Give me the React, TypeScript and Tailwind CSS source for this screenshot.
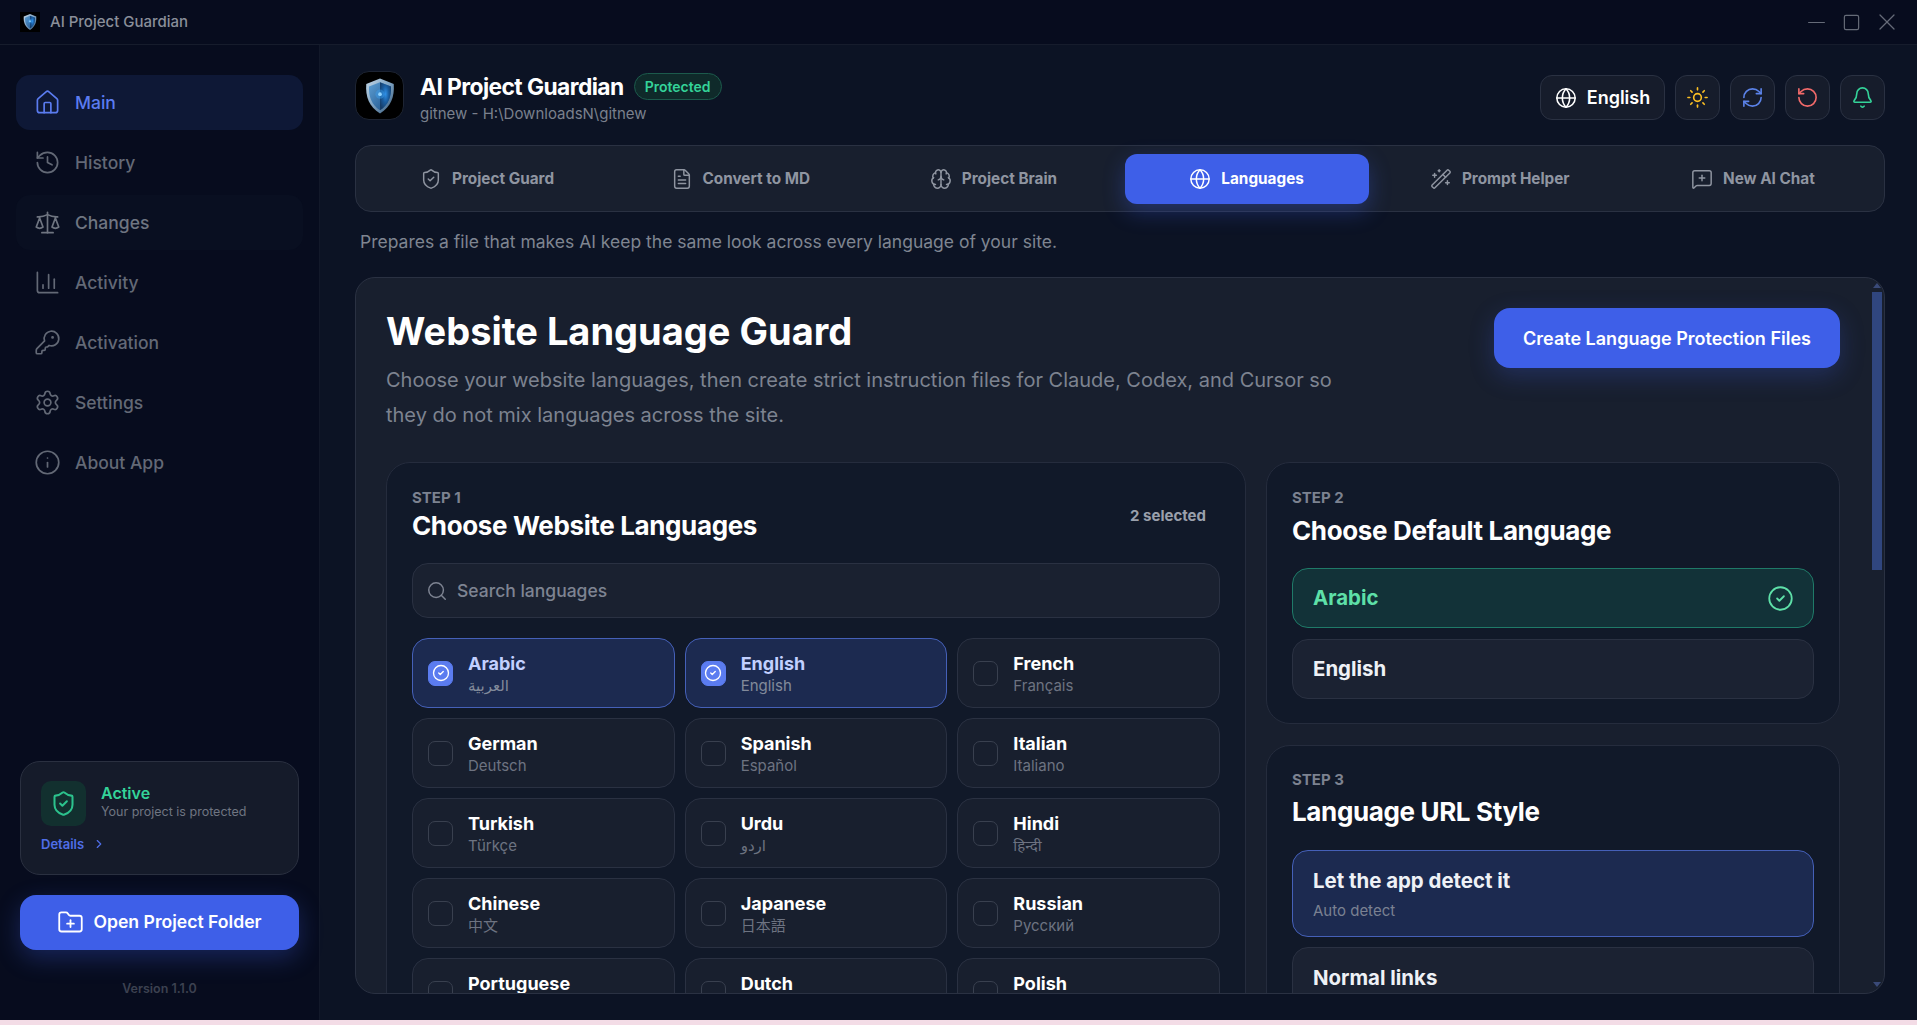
import {
  Bell,
  Brain,
  ChartColumn,
  ChevronRight,
  CircleCheck,
  FileText,
  FolderPlus,
  Globe,
  History,
  House,
  Info,
  KeyRound,
  MessageSquarePlus,
  Minus,
  RefreshCw,
  RotateCcw,
  Scale,
  Search,
  Settings,
  ShieldCheck,
  Square,
  Sun,
  WandSparkles,
  X,
} from "lucide-react";
import type { LucideIcon } from "lucide-react";
import { useId } from "react";

const navItems: { label: string; icon: LucideIcon }[] = [
  { label: "Main", icon: House },
  { label: "History", icon: History },
  { label: "Changes", icon: Scale },
  { label: "Activity", icon: ChartColumn },
  { label: "Activation", icon: KeyRound },
  { label: "Settings", icon: Settings },
  { label: "About App", icon: Info },
];

const tabs: { label: string; icon: LucideIcon }[] = [
  { label: "Project Guard", icon: ShieldCheck },
  { label: "Convert to MD", icon: FileText },
  { label: "Project Brain", icon: Brain },
  { label: "Languages", icon: Globe },
  { label: "Prompt Helper", icon: WandSparkles },
  { label: "New AI Chat", icon: MessageSquarePlus },
];

const languages = [
  { name: "Arabic", native: "العربية", checked: true },
  { name: "English", native: "English", checked: true },
  { name: "French", native: "Français" },
  { name: "German", native: "Deutsch" },
  { name: "Spanish", native: "Español" },
  { name: "Italian", native: "Italiano" },
  { name: "Turkish", native: "Türkçe" },
  { name: "Urdu", native: "اردو" },
  { name: "Hindi", native: "हिन्दी" },
  { name: "Chinese", native: "中文" },
  { name: "Japanese", native: "日本語" },
  { name: "Russian", native: "Русский" },
  { name: "Portuguese", native: "Português" },
  { name: "Dutch", native: "Nederlands" },
  { name: "Polish", native: "Polski" },
];

function ShieldLogo({ className }: { className: string }) {
  const id = useId();
  return (
    <svg viewBox="0 0 48 48" className={className}>
      <defs>
        <linearGradient id={id + "rim"} x1="0" y1="0" x2="1" y2="1">
          <stop offset="0" stopColor="#c4d8e8" />
          <stop offset="0.5" stopColor="#7fa3c2" />
          <stop offset="1" stopColor="#35587a" />
        </linearGradient>
        <linearGradient id={id + "left"} x1="0" y1="0" x2="1" y2="1">
          <stop offset="0" stopColor="#5d9fd4" />
          <stop offset="1" stopColor="#1c4f86" />
        </linearGradient>
        <radialGradient id={id + "core"} cx="0.5" cy="0.42" r="0.6">
          <stop offset="0" stopColor="#2f8fe6" />
          <stop offset="0.5" stopColor="#1a5c9e" />
          <stop offset="1" stopColor="#163d68" />
        </radialGradient>
      </defs>
      <path d="M24 5 L39 11 C40 25 36 36 24 43 C12 36 8 25 9 11 Z" fill={"url(#" + id + "rim)"} />
      <path d="M24 9 L36 13.5 C36.5 25 33 33.5 24 39.5 C15 33.5 11.5 25 12 13.5 Z" fill={"url(#" + id + "left)"} />
      <path d="M24 9 L36 13.5 C36.5 25 33 33.5 24 39.5 Z" fill={"url(#" + id + "core)"} />
      <circle cx="24" cy="22" r="5" fill="#3aa0f2" fillOpacity="0.45" />
      <circle cx="24" cy="22" r="2" fill="#8fd2ff" />
    </svg>
  );
}

function Sidebar() {
  return (
    <aside className="w-[320px] shrink-0 border-r border-[#121829] bg-[#070c1e] flex flex-col px-4 pt-[30px]">
      <nav className="flex flex-col gap-[5px]">
        {navItems.map((item, i) => (
          <div
            key={item.label}
            className={
              "h-[55px] rounded-[14px] flex items-center gap-[14px] pl-[18px] text-[17.5px] font-medium " +
              (i === 0
                ? "bg-[#0e1836] text-[#5b7cf0]"
                : i === 2
                  ? "bg-[#090f21] text-[#6f7581]"
                  : "text-[#636976]")
            }
          >
            <item.icon className="w-[27px] h-[27px]" strokeWidth={1.5} />
            <span className="pt-[2px]">{item.label}</span>
          </div>
        ))}
      </nav>
      <div className="flex-1" />
      <div className="mx-1 h-[114px] rounded-[20px] border border-[#2a3040] bg-[#151b2a] px-[20px] pt-[19px]">
        <div className="flex items-center gap-[15px]">
          <div className="w-[45px] h-[45px] rounded-[10px] bg-[#12302f] flex items-center justify-center text-[#2cc28d]">
            <ShieldCheck className="w-[27px] h-[27px]" strokeWidth={1.8} />
          </div>
          <div className="-mt-[2px]">
            <div className="text-[16px] leading-[19px] font-semibold text-[#34d399]">Active</div>
            <div className="text-[12.5px] leading-[18px] text-[#6f7581]">Your project is protected</div>
          </div>
        </div>
        <div className="mt-[9px] flex items-center gap-[8px] text-[13px] leading-[18px] font-semibold text-[#4f6ee8]">
          Details
          <ChevronRight className="w-[14px] h-[14px]" strokeWidth={2} />
        </div>
      </div>
      <div className="mx-1 mt-5 h-[55px] rounded-[16px] bg-[#3e5fe8] shadow-[0_8px_24px_rgba(62,95,232,0.3)] flex items-center justify-center gap-[9px] text-white text-[17.6px] font-semibold">
        <FolderPlus className="w-[27px] h-[27px]" strokeWidth={1.6} />
        Open Project Folder
      </div>
      <div className="mt-[29px] mb-[21px] text-center text-[12.5px] leading-[20px] font-semibold text-[#3c4150]">Version 1.1.0</div>
    </aside>
  );
}

function Header() {
  return (
    <header className="flex items-center justify-between h-[49px]">
      <div className="flex items-start gap-[16px]">
        <div className="w-[49px] h-[49px] rounded-[14px] bg-black border border-[#1d2433] flex items-center justify-center">
          <ShieldLogo className="w-[44px] h-[44px]" />
        </div>
        <div className="pt-[2px]">
          <div className="flex items-center gap-[10px] h-[29px]">
            <span className="text-[22.8px] font-bold tracking-tight text-white">AI Project Guardian</span>
            <span className="-mt-[2px] h-[27px] px-[10px] rounded-full border border-[#1c5a4c] bg-[#0f2a2a] text-[14px] font-semibold text-[#34d399] flex items-center">
              Protected
            </span>
          </div>
          <div className="mt-[2px] text-[15px] leading-[20px] text-[#7a808d]">gitnew - H:\DownloadsN\gitnew</div>
        </div>
      </div>
      <div className="flex items-center gap-[10px]">
        <div className="h-[45px] w-[125px] rounded-[12px] border border-[#2a3142] bg-[#161c2b] flex items-center justify-center gap-[10px] text-white text-[18px] font-semibold">
          <Globe className="w-[22px] h-[22px]" strokeWidth={1.7} />
          English
        </div>
        <IconButton icon={Sun} color="text-[#fbbf24]" />
        <IconButton icon={RefreshCw} color="text-[#5b82e8]" />
        <IconButton icon={RotateCcw} color="text-[#f26a6a]" />
        <IconButton icon={Bell} color="text-[#34d399]" />
      </div>
    </header>
  );
}

function IconButton({ icon: Icon, color }: { icon: LucideIcon; color: string }) {
  return (
    <div className={"w-[45px] h-[45px] rounded-[12px] border border-[#2a3142] bg-[#161c2b] flex items-center justify-center " + color}>
      <Icon className="w-[23px] h-[23px]" strokeWidth={1.7} />
    </div>
  );
}

function TabBar() {
  return (
    <div className="mt-[23px] h-[67px] rounded-[16px] border border-[#2a3142] bg-[#181f2e] px-[9px] pt-[8px] pb-[7px] grid grid-cols-6 gap-[9px]">
      {tabs.map((tab) => (
        <div
          key={tab.label}
          className={
            "rounded-[12px] flex items-center justify-center gap-[10px] text-[15.3px] font-bold " +
            (tab.label === "Languages"
              ? "bg-[#3e5fe8] text-white shadow-[0_8px_22px_rgba(62,95,232,0.32)]"
              : "text-[#8f95a1]")
          }
        >
          <tab.icon className="w-[22px] h-[22px]" strokeWidth={1.6} />
          {tab.label}
        </div>
      ))}
    </div>
  );
}

function StepLabel({ children }: { children: string }) {
  return <div className="text-[15px] leading-[20px] font-bold text-[#7c8290]">{children}</div>;
}

function LanguageCard({ name, native, checked }: { name: string; native: string; checked?: boolean }) {
  return (
    <div
      className={
        "h-[70px] rounded-[16px] border flex items-center gap-[15px] pl-[15px] " +
        (checked ? "border-[#4560b8] bg-[#1c2a50]" : "border-[#2a3142] bg-[#181f2e]")
      }
    >
      <div
        className={
          "w-[25px] h-[25px] rounded-[7px] flex items-center justify-center border " +
          (checked ? "bg-[#5b7cf0] border-[#5b7cf0] text-white" : "border-[#39404f]")
        }
      >
        {checked && <CircleCheck className="w-[18px] h-[18px]" strokeWidth={1.8} />}
      </div>
      <div className="pt-[2px]">
        <div className={"text-[18px] leading-[24px] font-bold " + (checked ? "text-[#c2d0ff]" : "text-white")}>{name}</div>
        <div className={"text-[15px] leading-[20px] " + (checked ? "text-[#828a9b]" : "text-[#6d7381]")}>{native}</div>
      </div>
    </div>
  );
}

function StepOne() {
  return (
    <section className="flex-1 min-w-0 h-[700px] rounded-[24px] border border-[#252c3d] bg-[#111929] px-[25px] pt-[25px]">
      <div className="flex items-center justify-between">
        <div>
          <StepLabel>STEP 1</StepLabel>
          <h3 className="mt-[1px] text-[26px] leading-[34px] font-bold tracking-[-0.014em] text-white">Choose Website Languages</h3>
        </div>
        <div className="pt-[2px] pr-[14px] text-[15px] font-bold text-[#9aa0ac]">2 selected</div>
      </div>
      <div className="mt-[20px] h-[55px] rounded-[16px] border border-[#2a3142] bg-[#1a2130] flex items-center gap-[9px] pl-[13px] text-[17.5px] font-medium text-[#7e8492]">
        <Search className="w-[22px] h-[22px]" strokeWidth={1.6} />
        <span className="pt-[2px]">Search languages</span>
      </div>
      <div className="mt-[20px] grid grid-cols-3 gap-[10px]">
        {languages.map((l) => (
          <LanguageCard key={l.name} {...l} />
        ))}
      </div>
    </section>
  );
}

function StepTwo() {
  return (
    <section className="h-[262px] shrink-0 rounded-[24px] border border-[#252c3d] bg-[#111929] px-[25px] pt-[25px]">
      <StepLabel>STEP 2</StepLabel>
      <h3 className="mt-[6px] text-[26px] leading-[34px] font-bold tracking-[-0.014em] text-white">Choose Default Language</h3>
      <div className="mt-[20px] h-[60px] rounded-[16px] border border-[#1f7a68] bg-[#123238] flex items-center justify-between pl-[20px] pr-[19px] text-[20.4px] font-bold text-[#5ee0a8]">
        Arabic
        <CircleCheck className="w-[27px] h-[27px]" strokeWidth={1.6} />
      </div>
      <div className="mt-[11px] h-[60px] rounded-[16px] border border-[#2a3142] bg-[#1b2232] flex items-center pl-[20px] text-[20.4px] font-bold text-[#eef1f6]">
        English
      </div>
    </section>
  );
}

function StepThree() {
  return (
    <section className="h-[400px] shrink-0 rounded-[24px] border border-[#252c3d] bg-[#111929] px-[25px] pt-[24px]">
      <StepLabel>STEP 3</StepLabel>
      <h3 className="mt-[5px] text-[26px] leading-[34px] font-bold tracking-[-0.014em] text-white">Language URL Style</h3>
      <div className="mt-[21px] h-[87px] rounded-[16px] border border-[#4560b8] bg-[#1c2a50] pl-[20px] pt-[16px]">
        <div className="text-[20.4px] leading-[28px] font-bold text-[#eef1f6]">Let the app detect it</div>
        <div className="mt-[6px] text-[15px] leading-[20px] text-[#7a8192]">Auto detect</div>
      </div>
      <div className="mt-[10px] h-[87px] rounded-[16px] border border-[#2a3142] bg-[#1b2232] pl-[20px] pt-[16px]">
        <div className="text-[20.4px] leading-[28px] font-bold text-[#eef1f6]">Normal links</div>
      </div>
    </section>
  );
}

function Scrollbar() {
  return (
    <div className="absolute top-[4px] right-[2px] bottom-[4px] w-[10px] flex flex-col items-center">
      <svg viewBox="0 0 8 5" className="w-[8px] h-[5px] mt-[1px] text-[#3a4a78]">
        <path d="M4 0 L8 5 L0 5 Z" fill="currentColor" />
      </svg>
      <div className="mt-[4px] h-[278px] w-full bg-[#30467f]" />
      <div className="flex-1" />
      <svg viewBox="0 0 8 5" className="w-[8px] h-[5px] mb-[2px] text-[#3a4a78]">
        <path d="M4 5 L8 0 L0 0 Z" fill="currentColor" />
      </svg>
    </div>
  );
}

function Panel() {
  return (
    <div className="relative flex-1 min-h-0 overflow-hidden rounded-[20px] border border-[#2a3142] bg-[#181f2e] pl-[30px] pr-[44px] pt-[28px]">
      <div className="flex items-start justify-between">
        <div>
          <h1 className="text-[38px] leading-[50px] font-bold text-white">Website Language Guard</h1>
          <p className="mt-[7px] w-[980px] text-[20px] leading-[35px] text-[#7d8390]">
            Choose your website languages, then create strict instruction files for Claude, Codex, and Cursor so they do not mix languages across the site.
          </p>
        </div>
        <div className="mt-[2px] h-[60px] w-[346px] rounded-[16px] bg-[#3e5fe8] shadow-[0_8px_24px_rgba(62,95,232,0.25)] flex items-center justify-center text-white text-[18px] font-semibold">
          Create Language Protection Files
        </div>
      </div>
      <div className="mt-[29px] flex gap-[20px]">
        <StepOne />
        <div className="w-[574px] shrink-0 flex flex-col gap-[21px]">
          <StepTwo />
          <StepThree />
        </div>
      </div>
      <Scrollbar />
    </div>
  );
}

export default function App() {
  return (
    <div className="h-[1025px] w-full overflow-hidden flex flex-col bg-[#f3dce6] font-['Inter','Noto_Sans','Noto_Sans_CJK_SC','DejaVu_Sans',sans-serif]">
      <div className="h-[1020px] flex flex-col bg-[#0c1324]">
        <div className="h-[45px] shrink-0 border-b border-[#161c2c] bg-[#070c1e] flex items-center pl-[20px] pr-[13px]">
          <div className="w-[20px] h-[20px] bg-black flex items-center justify-center">
            <ShieldLogo className="w-[20px] h-[20px]" />
          </div>
          <span className="ml-[10px] text-[15px] font-medium text-[#8a8f9a]">AI Project Guardian</span>
          <div className="flex-1" />
          <div className="flex items-center text-[#656b78]">
            <div className="w-[35px] flex justify-center">
              <Minus className="w-[27px] h-[27px]" strokeWidth={1.1} />
            </div>
            <div className="w-[35px] flex justify-center items-center">
              <Square className="w-[19px] h-[19px]" strokeWidth={1.5} />
            </div>
            <div className="w-[35px] flex justify-center">
              <X className="w-[28px] h-[28px]" strokeWidth={1.1} />
            </div>
          </div>
        </div>
        <div className="flex-1 min-h-0 flex">
          <Sidebar />
          <main className="flex-1 min-w-0 flex flex-col pl-[35px] pr-[32px] pt-[28px] pb-[26px]">
            <Header />
            <TabBar />
            <p className="ml-[5px] h-[65px] pb-[5px] flex items-center text-[17.5px] text-[#7f8591]">
              Prepares a file that makes AI keep the same look across every language of your site.
            </p>
            <Panel />
          </main>
        </div>
      </div>
    </div>
  );
}
